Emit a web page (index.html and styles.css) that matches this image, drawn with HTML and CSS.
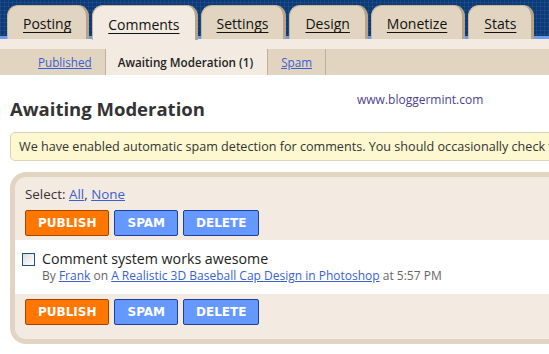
FILE: index.html
```html
<!DOCTYPE html>
<html>
<head>
<meta charset="utf-8">
<link rel="stylesheet" href="styles.css">
</head>
<body>
<div class="page">
  <div class="topbar">
    <a class="tab">Posting</a>
    <a class="tab active">Comments</a>
    <a class="tab">Settings</a>
    <a class="tab">Design</a>
    <a class="tab">Monetize</a>
    <a class="tab">Stats</a>
  </div>
  <div class="strip"></div>
  <div class="subtabs">
    <div class="subtab first"><a class="link">Published</a></div>
    <div class="subtab current">Awaiting Moderation (1)</div>
    <div class="subtab"><a class="link">Spam</a></div>
  </div>
  <div class="content">
    <div class="headrow">
      <h1 class="title">Awaiting Moderation</h1>
      <span class="site">www.bloggermint.com</span>
    </div>
    <div class="notice">We have enabled automatic spam detection for comments. You should occasionally check the spam folder.</div>
    <div class="panel">
      <div class="select">Select: <a class="link">All</a>, <a class="link">None</a></div>
      <div class="actions">
        <button class="btn orange">PUBLISH</button>
        <button class="btn blue">SPAM</button>
        <button class="btn blue">DELETE</button>
      </div>
      <div class="comment">
        <span class="check"></span>
        <div class="cbody">
          <div class="ctitle">Comment system works awesome</div>
          <div class="meta">By <a class="link">Frank</a> on <a class="link">A Realistic 3D Baseball Cap Design in Photoshop</a> at 5:57 PM</div>
        </div>
      </div>
      <div class="actions bottom">
        <button class="btn orange">PUBLISH</button>
        <button class="btn blue">SPAM</button>
        <button class="btn blue">DELETE</button>
      </div>
    </div>
  </div>
</div>
</body>
</html>
```
FILE: styles.css
```css
html, body { margin: 0; padding: 0; background: #fff; overflow: hidden; }
body { font-family: "Open Sans", "DejaVu Sans", sans-serif; color: #333; }
.page { width: 640px; }

.topbar {
  height: 39px;
  display: flex;
  align-items: flex-end;
  gap: 3px;
  padding-left: 7px;
  background:
    linear-gradient(to bottom, transparent 0, transparent 36px, #6b9cf0 36px),
    repeating-linear-gradient(90deg, rgba(255,255,255,0.06) 0 1px, transparent 1px 4px),
    repeating-linear-gradient(0deg, rgba(255,255,255,0.06) 0 1px, transparent 1px 4px),
    #0b3a78;
}
.tab {
  box-sizing: border-box;
  height: 34px;
  padding: 2px 15px 0 15px;
  display: flex;
  align-items: center;
  background: #e1d5c1;
  border-radius: 11px 11px 0 0;
  border-top: 1px solid #c9b79c;
  border-left: 1px solid #c9b79c;
  border-right: 3px solid #b5a38a;
  font-size: 14px;
  color: #111;
  text-decoration: underline;
  text-underline-offset: 3px;
}
.tab.active { background: #f3ebe1; height: 35px; margin-bottom: -1px; }

.strip { height: 10px; background: #f3ebe1; }

.subtabs {
  height: 26px;
  display: flex;
  background: #e1d5c1;
  font-size: 11.7px;
}
.subtab {
  display: flex;
  align-items: center;
  padding: 0 13px;
  border-right: 1px solid #c2ae94;
}
.subtab.first { padding-left: 38px; }
.subtab.current { background: #f3ebe1; color: #222; font-weight: 600; padding: 0 14px 0 12px; }

.link { color: #3a5fd0; text-decoration: underline; }

.content { padding-left: 10px; }
.headrow {
  display: grid;
  grid-template-columns: 347px auto;
  align-items: start;
  margin-top: 21px;
}
.title {
  margin: 0;
  font-size: 18.5px;
  line-height: 26px;
  font-weight: 700;
  color: #333;
}
.site { font-size: 12px; color: #4d3f8a; line-height: 14px; margin-top: -3px; }

.notice {
  margin-top: 10px;
  box-sizing: border-box;
  height: 29px;
  padding: 0 8px;
  display: flex;
  align-items: center;
  white-space: nowrap;
  background: #fdf8cf;
  border: 1px solid #d9d3b8;
  border-radius: 5px;
  font-size: 12.6px;
  color: #333;
}

.panel {
  margin-top: 11px;
  background: #f3ebe1;
  border: 5px solid #e1d5c1;
  border-radius: 16px;
  padding-bottom: 14px;
}
.select { padding: 9px 10px 0; font-size: 13.4px; line-height: 16px; color: #333; }
.actions { display: flex; gap: 5px; padding: 8px 10px 4px; }
.actions.bottom { padding: 5px 10px 0; }
.btn {
  box-sizing: border-box;
  height: 26px;
  padding: 0 12px;
  font-family: "DejaVu Sans", sans-serif;
  font-weight: 700;
  font-size: 12px;
  color: #fff;
  border-radius: 2px;
}
.btn.orange { background: #ff7700; border: 1px solid #a84400; min-width: 84px; }
.btn.blue { background: #6699ff; border: 1px solid #1c3f9e; }

.comment {
  background: #fff;
  display: flex;
  gap: 7px;
  padding: 10px 7px 8px;
  height: 54px;
  box-sizing: border-box;
}
.check {
  flex: none;
  width: 11px; height: 11px;
  margin-top: 3px;
  border: 1px solid #1c5180;
  background: linear-gradient(135deg, #dcdcd6, #fff);
}
.ctitle { font-size: 14.2px; line-height: 18px; color: #222; }
.meta { font-size: 12px; line-height: 15px; color: #666; }
```
